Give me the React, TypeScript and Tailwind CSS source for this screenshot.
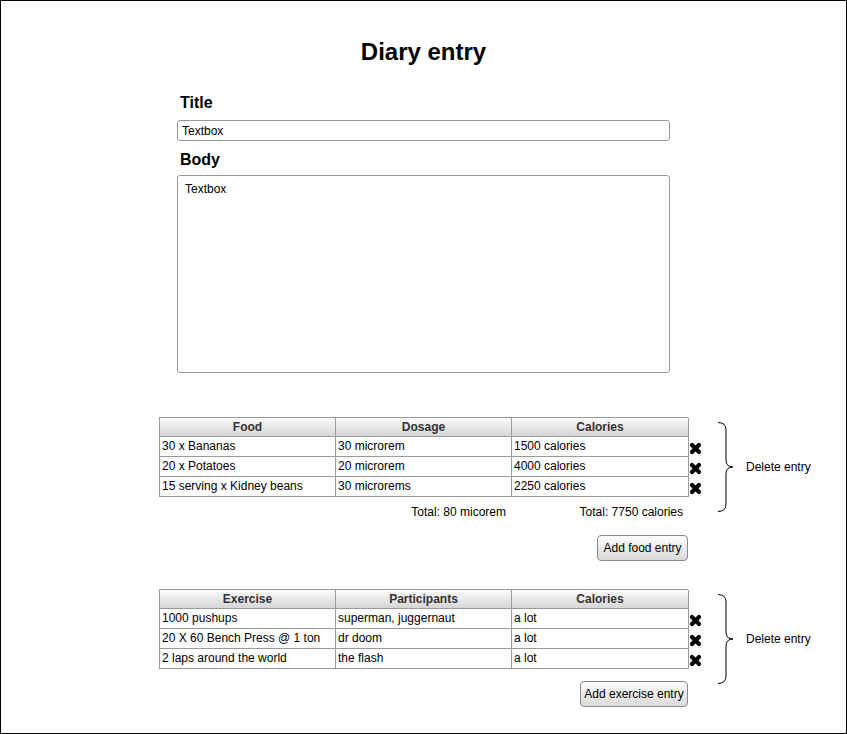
import React from "react";

type Section = {
    headers: string[];
    rows: string[][];
    totals?: string[];
    button: string;
    buttonWidth: string;
    buttonGap: string;
};

const food: Section = {
    headers: ["Food", "Dosage", "Calories"],
    rows: [
        ["30 x Bananas", "30 microrem", "1500 calories"],
        ["20 x Potatoes", "20 microrem", "4000 calories"],
        ["15 serving x Kidney beans", "30 microrems", "2250 calories"],
    ],
    totals: ["", "Total: 80 micorem", "Total: 7750 calories"],
    button: "Add food entry",
    buttonWidth: "w-[91px]",
    buttonGap: "mt-[15px]",
};

const exercise: Section = {
    headers: ["Exercise", "Participants", "Calories"],
    rows: [
        ["1000 pushups", "superman, juggernaut", "a lot"],
        ["20 X 60 Bench Press @ 1 ton", "dr doom", "a lot"],
        ["2 laps around the world", "the flash", "a lot"],
    ],
    button: "Add exercise entry",
    buttonWidth: "w-[108px]",
    buttonGap: "mt-[12px]",
};

function Cross() {
    return (
        <svg width="13" height="13" viewBox="0 0 13 13">
            <path d="M3 3 L10 10 M10 3 L3 10" stroke="#000" strokeWidth="4.2" strokeLinecap="round" />
        </svg>
    );
}

function Brace() {
    return (
        <svg width="16" height="90" viewBox="0 0 16 90" fill="none">
            <path
                d="M0 0.5 Q8 0.5 8 8 L8 38 Q8 45 15 45 Q8 45 8 52 L8 82 Q8 89.5 0 89.5"
                stroke="#000"
                strokeWidth="1"
            />
        </svg>
    );
}

function EntryTable({ section }: { section: Section }) {
    return (
        <div className="flex items-start">
            <div className="w-[529px]">
                <div className="border-l border-t border-[#9a9a9a]">
                    <div className="grid grid-cols-[176px_176px_177px]">
                        {section.headers.map((h) => (
                            <div
                                key={h}
                                className="h-[19px] border-r border-b border-[#9a9a9a] bg-gradient-to-b from-[#fbfbfb] to-[#d6d6d6] text-center text-xs font-bold leading-[18px] text-[#333]"
                            >
                                {h}
                            </div>
                        ))}
                    </div>
                    {section.rows.map((row, i) => (
                        <div key={i} className="grid grid-cols-[176px_176px_177px]">
                            {row.map((c, j) => (
                                <div
                                    key={j}
                                    className="h-[20px] border-r border-b border-[#9a9a9a] pl-[2px] text-xs leading-[19px] whitespace-nowrap"
                                >
                                    {c}
                                </div>
                            ))}
                        </div>
                    ))}
                </div>
                {section.totals && (
                    <div className="mt-[8px] grid grid-cols-[176px_176px_177px] text-xs leading-[15px]">
                        {section.totals.map((t, i) => (
                            <div key={i} className="pr-[5px] text-right">
                                {t}
                            </div>
                        ))}
                    </div>
                )}
                <div className={`${section.buttonGap} flex justify-end`}>
                    <button
                        className={`${section.buttonWidth} h-[26px] rounded-[4px] border border-[#8a8a8a] bg-gradient-to-b from-[#fdfdfd] to-[#d9d9d9] text-xs`}
                    >
                        {section.button}
                    </button>
                </div>
            </div>
            <div className="flex w-[30px] flex-col items-start pt-[20px] pl-[1px]">
                {section.rows.map((_, i) => (
                    <div key={i} className="flex h-[20px] items-center pt-[3px]">
                        <Cross />
                    </div>
                ))}
            </div>
            <div className="mt-[5px] flex items-center">
                <Brace />
                <span className="ml-[12px] text-xs">Delete entry</span>
            </div>
        </div>
    );
}

export default function App() {
    return (
        <div className="relative h-[734px] w-[847px] border border-black bg-white font-['Liberation_Sans',Arial,sans-serif] text-black">
            <h1 className="mt-[37px] text-center text-2xl leading-7 font-bold">Diary entry</h1>

            <div className="ml-[176px] w-[493px]">
                <h2 className="mt-[27px] pl-[3px] text-base leading-5 font-bold">Title</h2>
                <div className="mt-[7px] h-[21px] rounded-[3px] border border-[#999] px-[4px] text-xs leading-[20px]">
                    Textbox
                </div>
                <h2 className="mt-[9px] pl-[3px] text-base leading-5 font-bold">Body</h2>
                <div className="mt-[5px] h-[198px] rounded-[3px] border border-[#999] px-[7px] pt-[6px] text-xs leading-[15px]">
                    Textbox
                </div>
            </div>

            <div className="mt-[44px] ml-[158px]">
                <EntryTable section={food} />
                <div className="mt-[28px]">
                    <EntryTable section={exercise} />
                </div>
            </div>
        </div>
    );
}
